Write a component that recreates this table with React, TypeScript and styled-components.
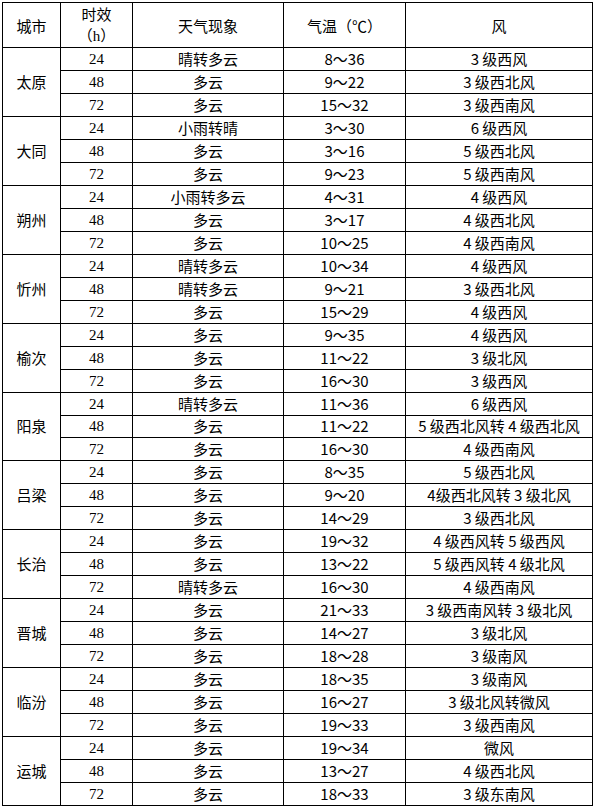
import React from "react";
import styled, { createGlobalStyle } from "styled-components";

const GlobalStyle = createGlobalStyle`
    html, body {
        margin: 0;
        padding: 0;
        background: #ffffff;
    }
    body {
        font-family: "Noto Sans CJK SC", "Liberation Sans", sans-serif;
        color: #000000;
    }
`;

interface Forecast {
    hours: string;
    weather: string;
    temp: string;
    wind: string;
}

interface City {
    name: string;
    rows: Forecast[];
}

const cities: City[] = [
    { name: "太原", rows: [
        { hours: "24", weather: "晴转多云", temp: "8～36", wind: "3 级西风" },
        { hours: "48", weather: "多云", temp: "9～22", wind: "3 级西北风" },
        { hours: "72", weather: "多云", temp: "15～32", wind: "3 级西南风" },
    ] },
    { name: "大同", rows: [
        { hours: "24", weather: "小雨转晴", temp: "3～30", wind: "6 级西风" },
        { hours: "48", weather: "多云", temp: "3～16", wind: "5 级西北风" },
        { hours: "72", weather: "多云", temp: "9～23", wind: "5 级西南风" },
    ] },
    { name: "朔州", rows: [
        { hours: "24", weather: "小雨转多云", temp: "4～31", wind: "4 级西风" },
        { hours: "48", weather: "多云", temp: "3～17", wind: "4 级西北风" },
        { hours: "72", weather: "多云", temp: "10～25", wind: "4 级西南风" },
    ] },
    { name: "忻州", rows: [
        { hours: "24", weather: "晴转多云", temp: "10～34", wind: "4 级西风" },
        { hours: "48", weather: "晴转多云", temp: "9～21", wind: "3 级西北风" },
        { hours: "72", weather: "多云", temp: "15～29", wind: "4 级西风" },
    ] },
    { name: "榆次", rows: [
        { hours: "24", weather: "多云", temp: "9～35", wind: "4 级西风" },
        { hours: "48", weather: "多云", temp: "11～22", wind: "3 级北风" },
        { hours: "72", weather: "多云", temp: "16～30", wind: "3 级西风" },
    ] },
    { name: "阳泉", rows: [
        { hours: "24", weather: "晴转多云", temp: "11～36", wind: "6 级西风" },
        { hours: "48", weather: "多云", temp: "11～22", wind: "5 级西北风转 4 级西北风" },
        { hours: "72", weather: "多云", temp: "16～30", wind: "4 级西南风" },
    ] },
    { name: "吕梁", rows: [
        { hours: "24", weather: "多云", temp: "8～35", wind: "5 级西北风" },
        { hours: "48", weather: "多云", temp: "9～20", wind: "4级西北风转 3 级北风" },
        { hours: "72", weather: "多云", temp: "14～29", wind: "3 级西北风" },
    ] },
    { name: "长治", rows: [
        { hours: "24", weather: "多云", temp: "19～32", wind: "4 级西风转 5 级西风" },
        { hours: "48", weather: "多云", temp: "13～22", wind: "5 级西风转 4 级北风" },
        { hours: "72", weather: "晴转多云", temp: "16～30", wind: "4 级西南风" },
    ] },
    { name: "晋城", rows: [
        { hours: "24", weather: "多云", temp: "21～33", wind: "3 级西南风转 3 级北风" },
        { hours: "48", weather: "多云", temp: "14～27", wind: "3 级北风" },
        { hours: "72", weather: "多云", temp: "18～28", wind: "3 级南风" },
    ] },
    { name: "临汾", rows: [
        { hours: "24", weather: "多云", temp: "18～35", wind: "3 级南风" },
        { hours: "48", weather: "多云", temp: "16～27", wind: "3 级北风转微风" },
        { hours: "72", weather: "多云", temp: "19～33", wind: "3 级西南风" },
    ] },
    { name: "运城", rows: [
        { hours: "24", weather: "多云", temp: "19～34", wind: "微风" },
        { hours: "48", weather: "多云", temp: "13～27", wind: "4 级西北风" },
        { hours: "72", weather: "多云", temp: "18～33", wind: "3 级东南风" },
    ] },
];

const Page = styled.div`
    padding: 2px 0 0 2px;
`;

const Table = styled.table`
    border-collapse: collapse;
    table-layout: fixed;
    width: 590px;
    font-size: 15px;
    line-height: 20px;
`;

const HeadRow = styled.tr`
    height: 45px;
`;

const BodyRow = styled.tr`
    height: 22.97px;
`;

const HeadCell = styled.th`
    border: 1px solid #000;
    padding: 0;
    font-weight: normal;
    text-align: center;
    vertical-align: middle;
    font-size: 15px;
    line-height: 21px;
`;

const Cell = styled.td<{ $serif?: boolean }>`
    border: 1px solid #000;
    padding: 0;
    text-align: center;
    vertical-align: middle;
    white-space: nowrap;
    font-family: ${({ $serif }) =>
        $serif
            ? '"Liberation Serif", "Noto Sans CJK SC", serif'
            : '"Noto Sans CJK SC", "Liberation Sans", sans-serif'};
    font-size: 15px;
`;

const Unit = styled.span`
    font-family: "Liberation Serif", serif;
    font-size: 15px;
`;

export default function App() {
    return (
        <Page>
            <GlobalStyle />
            <Table>
                <colgroup>
                    <col style={{ width: 58 }} />
                    <col style={{ width: 72 }} />
                    <col style={{ width: 151 }} />
                    <col style={{ width: 122 }} />
                    <col style={{ width: 187 }} />
                </colgroup>
                <thead>
                    <HeadRow>
                        <HeadCell>城市</HeadCell>
                        <HeadCell>
                            时效
                            <br />
                            （<Unit>h</Unit>）
                        </HeadCell>
                        <HeadCell>天气现象</HeadCell>
                        <HeadCell>气温（℃）</HeadCell>
                        <HeadCell>风</HeadCell>
                    </HeadRow>
                </thead>
                <tbody>
                    {cities.map((city) =>
                        city.rows.map((row, i) => (
                            <BodyRow key={city.name + row.hours}>
                                {i === 0 && <Cell rowSpan={3}>{city.name}</Cell>}
                                <Cell $serif>{row.hours}</Cell>
                                <Cell>{row.weather}</Cell>
                                <Cell>{row.temp}</Cell>
                                <Cell>{row.wind}</Cell>
                            </BodyRow>
                        ))
                    )}
                </tbody>
            </Table>
        </Page>
    );
}
